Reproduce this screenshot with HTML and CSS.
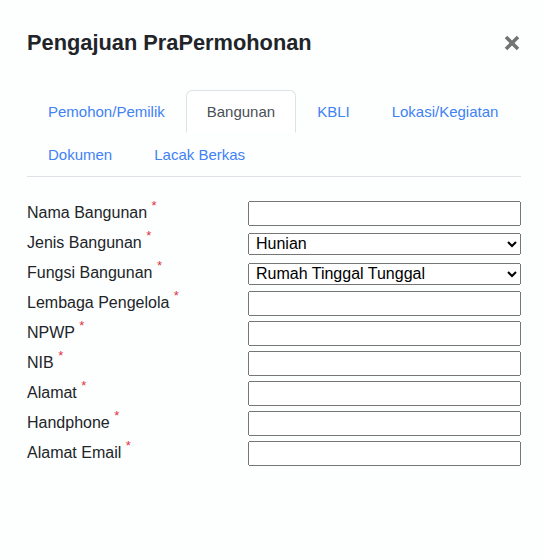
FILE: index.html
```html
<!DOCTYPE html>
<html lang="id">
<head>
<meta charset="utf-8">
<title>Pengajuan PraPermohonan</title>
<link rel="stylesheet" href="styles.css">
</head>
<body>
<div class="modal">
  <div class="modal-header">
    <h5 class="modal-title">Pengajuan PraPermohonan</h5>
    <button class="close" type="button" aria-label="Close">
      <svg width="16" height="16" viewBox="0 0 16 16"><path d="M2 2 L14 14 M14 2 L2 14" stroke="#737373" stroke-width="3.6" stroke-linecap="butt"/></svg>
    </button>
  </div>
  <ul class="nav-tabs">
    <li><a class="nav-link" href="#">Pemohon/Pemilik</a></li>
    <li><a class="nav-link active" href="#">Bangunan</a></li>
    <li><a class="nav-link" href="#">KBLI</a></li>
    <li><a class="nav-link" href="#">Lokasi/Kegiatan</a></li>
    <li><a class="nav-link" href="#">Dokumen</a></li>
    <li><a class="nav-link" href="#">Lacak Berkas</a></li>
  </ul>
  <form class="form-grid">
    <label>Nama Bangunan <sup class="req">*</sup></label>
    <input type="text">
    <label>Jenis Bangunan <sup class="req">*</sup></label>
    <select><option>Hunian</option></select>
    <label>Fungsi Bangunan <sup class="req">*</sup></label>
    <select><option>Rumah Tinggal Tunggal</option></select>
    <label>Lembaga Pengelola <sup class="req">*</sup></label>
    <input type="text">
    <label>NPWP <sup class="req">*</sup></label>
    <input type="text">
    <label>NIB <sup class="req">*</sup></label>
    <input type="text">
    <label>Alamat <sup class="req">*</sup></label>
    <input type="text">
    <label>Handphone <sup class="req">*</sup></label>
    <input type="text">
    <label>Alamat Email <sup class="req">*</sup></label>
    <input type="text">
  </form>
</div>
</body>
</html>
```
FILE: styles.css
```css
html, body {
  margin: 0;
  padding: 0;
  background: #fdfefe;
}
body {
  font-family: "Liberation Sans", Arial, sans-serif;
  color: #212529;
}
.modal {
  padding: 30px 23px 0 27px;
}
.modal-header {
  display: flex;
  align-items: center;
  justify-content: space-between;
  height: 25px;
}
.modal-title {
  margin: 0;
  font-size: 21.8px;
  font-weight: bold;
  line-height: 25px;
  color: #212529;
}
.close {
  border: 0;
  background: none;
  padding: 0;
  margin-right: 1px;
  width: 16px;
  height: 16px;
  display: flex;
  cursor: pointer;
}
.nav-tabs {
  list-style: none;
  margin: 35px 0 0 0;
  padding: 0;
  display: flex;
  flex-wrap: wrap;
  border-bottom: 1px solid #dee2e6;
}
.nav-tabs li {
  display: block;
}
.nav-link {
  display: block;
  padding: 12px 20px;
  font-size: 15px;
  line-height: 17px;
  color: #3f82f4;
  text-decoration: none;
  border: 1px solid transparent;
  border-radius: 6px 6px 0 0;
}
.nav-link.active {
  color: #495057;
  background: #ffffff;
  border-color: #dee2e6 #dee2e6 transparent;
}
.form-grid {
  display: grid;
  grid-template-columns: 221px 1fr;
  grid-auto-rows: 25px;
  row-gap: 5px;
  align-items: center;
  margin-top: 24px;
}
.form-grid label {
  font-size: 16px;
  line-height: 18px;
  color: #212529;
  padding-bottom: 2px;
}
.req {
  color: #dc3545;
  font-size: 13px;
  line-height: 0;
  position: relative;
  top: -1px;
}
.form-grid input,
.form-grid select {
  font-family: "Liberation Sans", Arial, sans-serif;
  font-size: 16px;
  width: 100%;
  box-sizing: border-box;
  margin: 0;
}
.form-grid input {
  height: 25px;
}
.form-grid select {
  height: 22px;
  padding-left: 3px;
  color: #000;
}
```
